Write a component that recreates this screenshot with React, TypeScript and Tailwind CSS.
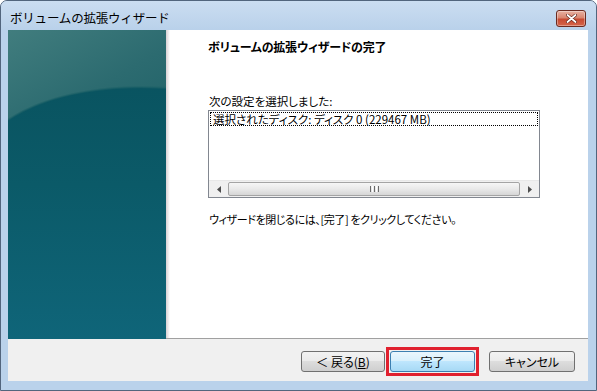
import React from "react";

const jp = "font-['Noto_Sans_CJK_JP','Noto_Sans',sans-serif] [font-feature-settings:'palt']";

function TealArt() {
  return (
    <svg width="158" height="309" viewBox="0 0 158 309" className="block">
      <defs>
        <linearGradient id="top" x1="0" y1="0" x2="1" y2="1">
          <stop offset="0" stopColor="#417d7e" />
          <stop offset="0.6" stopColor="#2c6b70" />
          <stop offset="1" stopColor="#226369" />
        </linearGradient>
        <linearGradient id="low" x1="0" y1="0" x2="0" y2="1">
          <stop offset="0" stopColor="#08505c" />
          <stop offset="0.5" stopColor="#0b5a68" />
          <stop offset="1" stopColor="#0f6579" />
        </linearGradient>
      </defs>
      <rect width="158" height="309" fill="url(#low)" />
      <path d="M0,0 H158 V58 C110,55 45,60 0,90 Z" fill="url(#top)" />
      <path d="M0,90 C45,60 110,55 158,58" fill="none" stroke="#1d6168" strokeWidth="2" opacity="0.6" />
    </svg>
  );
}

function Arrow({ dir }: { dir: "left" | "right" }) {
  return (
    <svg width="4" height="7" viewBox="0 0 4 7">
      {dir === "left" ? <path d="M4,0 L0,3.5 L4,7 Z" fill="#4d4d4d" /> : <path d="M0,0 L4,3.5 L0,7 Z" fill="#4d4d4d" />}
    </svg>
  );
}

function WinButton({ children, focused }: { children: React.ReactNode; focused?: boolean }) {
  return (
    <div
      className={`h-[21px] flex items-center justify-center rounded-[3px] border text-[12px] text-black ${jp} ${
        focused
          ? "w-[85px] border-[#3c7fb1] bg-[linear-gradient(#eaf6fd_0%,#d9f0fc_45%,#bee6fd_50%,#a7d9f5_100%)]"
          : "border-[#707070] bg-[linear-gradient(#f2f2f2_0%,#ebebeb_45%,#dddddd_50%,#cfcfcf_100%)]"
      }`}
    >
      {children}
    </div>
  );
}

export default function App() {
  return (
    <div className="w-[597px] h-[391px] flex flex-col overflow-hidden rounded-t-[7px] border border-[#52657d] bg-[#bad2eb]">
      {/* title bar */}
      <div className="h-[29px] shrink-0 flex items-start bg-[linear-gradient(#cbddf1,#b9d1ea)]">
        <span className="pl-[9px] pt-[10px] text-[12.5px] leading-[14px] text-black font-['Noto_Sans_CJK_JP',sans-serif] tracking-[-0.2px]">
          ボリュームの拡張ウィザード
        </span>
        <div className="ml-auto mr-[10px] mt-[9px] w-[30px] h-[17px] rounded-[3px] border border-[#6b2a20] bg-[linear-gradient(#e8b1a2_0%,#d98670_45%,#c74a32_55%,#d6654a_100%)] flex items-center justify-center shadow-[inset_0_0_0_1px_rgba(255,255,255,0.35)]">
          <svg width="11" height="9" viewBox="0 0 11 9">
            <path d="M1.5,1 L9.5,8 M9.5,1 L1.5,8" stroke="#5a1d14" strokeWidth="3" strokeLinecap="round" />
            <path d="M1.5,1 L9.5,8 M9.5,1 L1.5,8" stroke="#ffffff" strokeWidth="1.8" strokeLinecap="round" />
          </svg>
        </div>
      </div>

      {/* client */}
      <div className="ml-[7px] mr-[8px] mb-[9px] flex-1 flex flex-col bg-white">
        <div className="h-[309px] flex">
          <TealArt />
          <div className="flex-1 flex border-b border-[#a0a0a0]">
            <div className="w-[4px] bg-[linear-gradient(to_right,#d8d0d3,#ffffff)]" />
            <div className={`flex-1 pl-[38px] pt-[10px] text-black ${jp}`}>
              <div className="text-[12px] leading-[14px] font-bold tracking-[-0.2px]">ボリュームの拡張ウィザードの完了</div>
              <div className="mt-[40px] text-[11.5px] leading-[14px] pl-[1px]">次の設定を選択しました:</div>
              <div className="mt-[2px] w-[332px] h-[88px] border border-[#828790] flex flex-col">
                <div className="mx-[1px] mt-[1px] h-[14px] border border-dotted border-black flex items-center text-[11.5px] leading-[12px] pl-[2px]">
                  選択されたディスク: ディスク 0 (229467 MB)
                </div>
                <div className="flex-1" />
                <div className="h-[17px] flex bg-[#f0f0f0] border-t border-[#e8e8e8]">
                  <div className="w-[19px] flex items-center justify-center">
                    <Arrow dir="left" />
                  </div>
                  <div className="flex-1 my-[1px] rounded-[2px] border border-[#a4a4a4] bg-[linear-gradient(#f6f6f6_0%,#e9e9e9_50%,#d6d6d6_100%)] flex items-center justify-center gap-[1px]">
                    <div className="w-[1px] h-[6px] bg-[#6a6a6a]" />
                    <div className="w-[1px] h-[6px] bg-[#ffffff]" />
                    <div className="w-[1px] h-[6px] bg-[#6a6a6a]" />
                    <div className="w-[1px] h-[6px] bg-[#ffffff]" />
                    <div className="w-[1px] h-[6px] bg-[#6a6a6a]" />
                  </div>
                  <div className="w-[19px] flex items-center justify-center">
                    <Arrow dir="right" />
                  </div>
                </div>
              </div>
              <div className="mt-[14px] text-[11px] leading-[14px] pl-[1px] tracking-[-0.4px]">
                ウィザードを閉じるには、[完了] をクリックしてください。
              </div>
            </div>
          </div>
        </div>

        {/* bottom buttons */}
        <div className="flex-1 bg-[#f0f0f0] flex justify-end items-start pt-[8px] pr-[13px]">
          <div className="mt-[4px] w-[84px]">
            <WinButton>
              ＜ 戻る(<span className="underline">B</span>)
            </WinButton>
          </div>
          <div className="ml-[1px] border-[3px] border-[#e0202e] p-[1px]">
            <WinButton focused>完了</WinButton>
          </div>
          <div className="ml-[10px] mt-[4px] w-[86px]">
            <WinButton>キャンセル</WinButton>
          </div>
        </div>
      </div>
    </div>
  );
}
